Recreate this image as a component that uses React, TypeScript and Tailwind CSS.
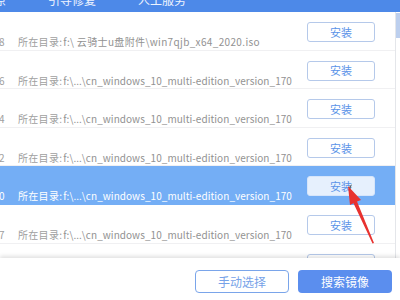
import React from "react";

const rows = [
  { n: "8", path: "f:\\ 云骑士u盘附件\\win7qjb_x64_2020.iso", wide: true },
  { n: "6", path: "f:\\...\\cn_windows_10_multi-edition_version_170" },
  { n: "4", path: "f:\\...\\cn_windows_10_multi-edition_version_170" },
  { n: "2", path: "f:\\...\\cn_windows_10_multi-edition_version_170" },
  { n: "0", path: "f:\\...\\cn_windows_10_multi-edition_version_170", sel: true },
  { n: "7", path: "f:\\...\\cn_windows_10_multi-edition_version_170" },
  { n: "5", path: "f:\\...\\cn_windows_10_multi-edition_version_170" },
];

export default function App() {
  return (
    <div
      className="relative w-[400px] h-[300px] overflow-hidden bg-white flex flex-col"
      style={{ fontFamily: '"Noto Sans CJK SC", "Noto Sans", sans-serif' }}
    >
      {/* top tab bar */}
      <div className="h-[12px] shrink-0 bg-[#4d89e8] overflow-hidden">
        <div className="flex gap-[42px] -ml-[42px] -mt-[6px] text-[12px] leading-[12px] text-[#eef4ff]">
          <span>备份还原</span>
          <span>引导修复</span>
          <span>人工服务</span>
        </div>
      </div>

      {/* list + scrollbar */}
      <div className="flex h-[246px] shrink-0">
        <div className="flex-1 overflow-hidden">
          {rows.map((r, i) => (
            <div
              key={i}
              className={`h-[38.6px] flex items-start border-b ${
                r.sel ? "bg-[#74aef5] border-[#74aef5]" : "bg-white border-[#f0f0f2]"
              }`}
            >
              <div
                className={`flex-1 flex pt-[23px] text-[10px] leading-[14px] whitespace-nowrap ${
                  r.sel ? "text-white" : "text-[#a0a0a0]"
                }`}
              >
                <span className="w-[19px] -ml-[1px]">{r.n}</span>
                <span className="tracking-[0.3px]">所在目录:</span>
                <span
                  className={`ml-[1px] ${r.wide ? "tracking-[0.35px]" : "tracking-[0.05px]"} ${
                    r.sel ? "text-white" : "text-[#929292]"
                  }`}
                >
                  {r.path}
                </span>
              </div>
              <div
                className={`mt-[10px] mr-[20px] w-[68px] h-[20px] shrink-0 rounded-[3px] flex items-center justify-center text-[11px] text-[#5a93e8] ${
                  r.sel ? "bg-[#e6f0fd] border border-[#d6e5fa]" : "bg-white border border-[#b5c9ea]"
                }`}
              >
                安装
              </div>
            </div>
          ))}
        </div>
        <div className="w-[5px] border-l border-[#e4e6ea] bg-white pt-[1px]">
          <div className="h-[25px] bg-[#bccfee]" />
        </div>
      </div>

      {/* footer */}
      <div className="relative flex-1 bg-white shadow-[0_-2px_4px_rgba(0,0,0,0.12)] flex justify-end items-start pt-[12px] pr-[8px] gap-[9px]">
        <div className="w-[94px] h-[23px] rounded-[4px] border border-[#7aa5ea] bg-white text-[#76a2e8] text-[12px] flex items-center justify-center">
          手动选择
        </div>
        <div className="w-[94px] h-[23px] rounded-[4px] bg-[#5b8eee] text-white text-[12px] flex items-center justify-center">
          搜索镜像
        </div>
      </div>

      {/* red annotation arrow and cursor */}
      <svg className="absolute left-0 top-0 pointer-events-none" width="400" height="300" viewBox="0 0 400 300">
        <polygon points="349,187 352,184 349,193 351,191" fill="#666" />
        <polygon
          points="348,186 361,200 357,201.5 374,243 372.5,243.5 353.5,203.3 350,205"
          fill="#e8322f"
        />
      </svg>
    </div>
  );
}
